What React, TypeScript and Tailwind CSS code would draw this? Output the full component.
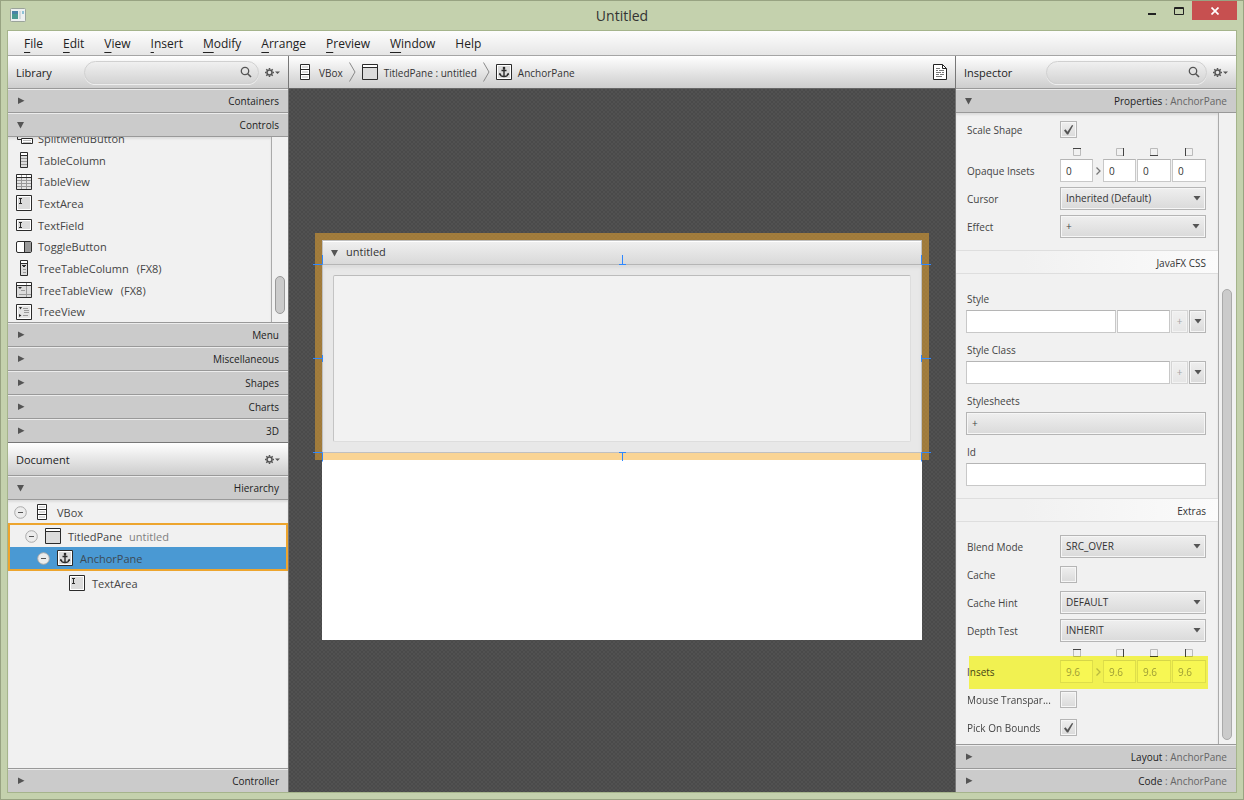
import type { ReactNode } from "react";

const menus = ["File", "Edit", "View", "Insert", "Modify", "Arrange", "Preview", "Window", "Help"];

const controls = [
  { label: "SplitMenuButton", icon: "splitMenu" },
  { label: "TableColumn", icon: "tableColumn" },
  { label: "TableView", icon: "tableView" },
  { label: "TextArea", icon: "textArea" },
  { label: "TextField", icon: "textField" },
  { label: "ToggleButton", icon: "toggle" },
  { label: "TreeTableColumn", note: "(FX8)", icon: "treeTableColumn" },
  { label: "TreeTableView", note: "(FX8)", icon: "treeTableView" },
  { label: "TreeView", icon: "treeView" },
];

const icons: Record<string, ReactNode> = {
  vbox: (
    <>
      <path d="M3.5.5h9v15h-9z" fill="#fff" stroke="#2b2b2b" />
      <path d="M3.5 5.5h9M3.5 10.5h9" stroke="#2b2b2b" />
      <path d="M5 2h6v2H5zM5 7h6v2H5zM5 12h6v2H5z" fill="#dcdcdc" />
    </>
  ),
  titledPane: (
    <>
      <path d="M.5.5h15v15H.5z" fill="#fff" stroke="#2b2b2b" />
      <path d="M1 4h14v11H1z" fill="#dcdcdc" />
      <path d="M1 3.5h14" stroke="#2b2b2b" />
    </>
  ),
  anchor: (
    <>
      <path d="M.5.5h15v15H.5z" fill="#fff" stroke="#2b2b2b" />
      <path d="M2 2h12v12H2z" fill="#dcdcdc" />
      <path d="M8 4v9M5.5 6.5h5" stroke="#2b2b2b" strokeWidth={1.4} />
      <path d="M4 9.8c.4 1.900 1.900 2.700 4 2.700s3.600-.8 4-2.700" stroke="#2b2b2b" strokeWidth={1.3} />
      <path d="M2.800 11 3.400 8.800 5.500 10.300zM13.200 11 12.600 8.800 10.500 10.300z" fill="#2b2b2b" />
      <circle cx={8} cy={4} r={1.3} fill="#2b2b2b" />
    </>
  ),
  textArea: (
    <>
      <path d="M.5.5h15v15H.5z" fill="#fff" stroke="#2b2b2b" />
      <path d="M2 2h12v12H2z" fill="#dcdcdc" />
      <path d="M3 3.5h3M3 8.5h3M4.500 3.5v5" stroke="#2b2b2b" />
    </>
  ),
  textField: (
    <>
      <path d="M.5 2.500h15v11H.5z" fill="#fff" stroke="#2b2b2b" />
      <path d="M2 4h12v8H2z" fill="#dcdcdc" />
      <path d="M3 5.500h3M3 10.500h3M4.500 5.500v5" stroke="#2b2b2b" />
    </>
  ),
  splitMenu: (
    <>
      <path d="M1.500 1v8.500h4M10.500 1v5M14.500 1v5" stroke="#2b2b2b" />
      <path d="M5.500 8.500h11v5h-11z" fill="#fff" stroke="#2b2b2b" />
      <path d="M7 10.500h8M7 12.500h8" stroke="#bbb" />
    </>
  ),
  tableColumn: (
    <>
      <path d="M4.500.5h7v15h-7z" fill="#dcdcdc" stroke="#2b2b2b" />
      <path d="M5 1h6v2H5z" fill="#fff" />
      <path d="M5 3.500h6" stroke="#2b2b2b" />
      <path d="M5 6.500h6M5 9.500h6M5 12.500h6" stroke="#999" />
    </>
  ),
  tableView: (
    <>
      <path d="M.5.5h15v15H.5z" fill="#e4e4e4" stroke="#2b2b2b" />
      <path d="M1 1h14v2H1z" fill="#fff" />
      <path d="M1 6.500h14M1 9.500h14M1 12.500h14M5.500 1v14M10.500 1v14" stroke="#999" />
      <path d="M1 3.500h14" stroke="#2b2b2b" />
    </>
  ),
  toggle: (
    <>
      <rect x={0.5} y={2.5} width={15} height={11} rx={1.5} fill="#fff" stroke="#2b2b2b" />
      <path d="M8 3h6.500l.5.5v9l-.5.5H8z" fill="#999" />
      <path d="M8.500 3v10" stroke="#2b2b2b" />
    </>
  ),
  treeTableColumn: (
    <>
      <path d="M4.500.5h7v15h-7z" fill="#dcdcdc" stroke="#2b2b2b" />
      <path d="M5 1h6v2H5z" fill="#fff" />
      <path d="M5 3.500h6" stroke="#2b2b2b" />
      <path d="M6 5.500h4M7 6.500h2" stroke="#2b2b2b" />
      <path d="M7 9.500h3M7 12.500h3" stroke="#999" />
    </>
  ),
  treeTableView: (
    <>
      <path d="M.5.5h15v15H.5z" fill="#dcdcdc" stroke="#2b2b2b" />
      <path d="M1 1h14v2H1z" fill="#fff" />
      <path d="M10.500 1v14M5 8.500h4M3 12.500h12" stroke="#999" />
      <path d="M1 3.500h14" stroke="#2b2b2b" />
      <path d="M2.500 5.500h3M3.500 6.500h1" stroke="#2b2b2b" />
    </>
  ),
  treeView: (
    <>
      <path d="M.5.5h15v15H.5z" fill="#fff" stroke="#2b2b2b" />
      <path d="M2 2h12v12H2z" fill="#e4e4e4" />
      <path d="M3 3h3L4.500 5.500zM3 10v3l2.500-1.500z" fill="#2b2b2b" />
      <path d="M7 4.500h5M8 6.500h5M8 8.500h5M7 11.500h5" stroke="#999" />
    </>
  ),
};

function NodeIcon({ name }: { name: string }) {
  return (
    <svg viewBox="0 0 16 16" className="size-4 shrink-0 overflow-visible" fill="none" aria-hidden="true">
      {icons[name]}
    </svg>
  );
}

function Arrow({ open }: { open?: boolean }) {
  return (
    <svg viewBox="0 0 8 8" className="size-2 shrink-0" fill="#555" aria-hidden="true">
      <path d={open ? "M0 1h7L3.500 7.500z" : "M1 .5v6.500L7.500 3.800z"} />
    </svg>
  );
}

function SectionBar({ title, detail, open }: { title: string; detail?: string; open?: boolean }) {
  return (
    <button
      type="button"
      aria-expanded={!!open}
      className="flex h-6 shrink-0 items-center justify-between border-t border-[#999] bg-[#cbcbcb] px-[9px] text-[10px] text-[#222] shadow-[inset_0_1px_0_#ececec]"
    >
      <Arrow open={open} />
      <span className="pt-[2px]">
        {title}
        {detail && <span className="text-[#666]"> : {detail}</span>}
      </span>
    </button>
  );
}

function GearButton({ label }: { label: string }) {
  return (
    <button type="button" aria-label={label} className="flex items-center">
      <svg viewBox="0 0 15 9" className="h-[9px] w-[15px]" fill="none" aria-hidden="true">
        <circle cx={4.5} cy={4.5} r={2.5} stroke="#555" strokeWidth={1.5} />
        <path
          d="M4.500 0v1.500M4.500 7.500V9M0 4.500h1.500M7.500 4.500H9M1.300 1.300l1 1M6.700 6.700l1 1M1.300 7.700l1-1M6.700 2.300l1-1"
          stroke="#555"
          strokeWidth={1.5}
        />
        <path d="M10 3.500h5L12.500 6z" fill="#555" />
      </svg>
    </button>
  );
}

function PanelHeader({ title, search }: { title: string; search?: string }) {
  return (
    <header className="flex h-8 shrink-0 items-center bg-linear-to-b from-white to-[#cdcdcd] px-2">
      <h2 className="w-17 shrink-0 pt-[2px] text-[11px] text-[#222]">{title}</h2>
      <div className={search ? "relative mr-[6px] flex-1 " + search : "flex-1"}>
        {search && (
          <>
            <input
              type="search"
              aria-label={"Search " + title}
              className="block h-[23px] w-full rounded-full border border-[#d0d0d0] bg-linear-to-b from-[#f0f0f0] to-[#d4d4d4] pr-7 pl-3 text-[11px] shadow-[0_1px_0_#eee] outline-none"
            />
            <svg
              viewBox="0 0 12 12"
              className="absolute top-[5px] right-[7px] size-3"
              fill="none"
              stroke="#555"
              strokeWidth={1.3}
              aria-hidden="true"
            >
              <circle cx={5} cy={5} r={3.7} />
              <path d="M7.700 7.700 11 11" strokeWidth={1.6} />
            </svg>
          </>
        )}
      </div>
      <GearButton label={title + " options"} />
    </header>
  );
}

function TitleBar() {
  return (
    <header className="flex h-[29px] shrink-0 items-start justify-between">
      <svg viewBox="0 0 16 14" className="mt-[7px] ml-[3px] h-[14px] w-4" aria-hidden="true">
        <rect x={0.5} y={0.5} width={15} height={13} rx={1} fill="#eef0f0" stroke="#9aa39a" />
        <path d="M2 3h6v8H2z" fill="#4b9a92" />
        <path d="M2 3h6v3H2z" fill="#4a83a6" />
        <path d="M9 3h2v8H9z" fill="#d5dadd" />
        <path d="M12 3h2v3h-2z" fill="#8fc3d8" />
      </svg>
      <h1 className="ml-[78px] self-center text-[14px] text-[#333]">Untitled</h1>
      <div className="flex h-[19px] items-center">
        <button type="button" aria-label="Minimize" className="px-2">
          <svg viewBox="0 0 10 10" className="size-[10px]" aria-hidden="true">
            <path d="M0 7h8v2H0z" fill="#222" />
          </svg>
        </button>
        <button type="button" aria-label="Maximize" className="px-2">
          <svg viewBox="0 0 10 10" className="size-[10px] overflow-visible" aria-hidden="true">
            <path d="M.5 1.500h9v7h-9zM.5 2.500h9" fill="none" stroke="#222" />
          </svg>
        </button>
        <button type="button" aria-label="Close" className="flex h-full w-[45px] items-center justify-center bg-[#c75050]">
          <svg viewBox="0 0 8 8" className="size-2" aria-hidden="true">
            <path d="M.5.5l7 7M7.500.5l-7 7" stroke="#fff" strokeWidth={1.7} />
          </svg>
        </button>
      </div>
    </header>
  );
}

function LibraryPanel() {
  return (
    <section className="flex min-h-0 flex-[387] flex-col">
      <PanelHeader title="Library" search="ml-0" />
      <SectionBar title="Containers" />
      <SectionBar title="Controls" open />
      <div className="flex min-h-0 flex-1 border-t border-[#999]">
        <div className="flex flex-1 flex-col justify-end overflow-hidden border-r border-[#aaa] shadow-[inset_0_2px_2px_#ddd]">
          <ul className="grid h-[195px] shrink-0 auto-rows-fr pl-2">
            {controls.map((item) => (
              <li key={item.label} className="flex items-center gap-[6px] text-[11px] text-[#444]">
                <NodeIcon name={item.icon} />
                <span className="pt-[2px]">
                  {item.label}
                  {item.note && <span className="ml-2">{item.note}</span>}
                </span>
              </li>
            ))}
          </ul>
        </div>
        <div className="flex w-4 flex-col justify-end px-[3px] pb-2">
          <div className="h-[38px] rounded-full border border-[#999] bg-[#cbcbcb]" />
        </div>
      </div>
      {["Menu", "Miscellaneous", "Shapes", "Charts", "3D"].map((title) => (
        <SectionBar key={title} title={title} />
      ))}
    </section>
  );
}

type TreeRowProps = { label: string; note?: string; icon: string; className: string; leaf?: boolean };

function TreeRow({ label, note, icon, className, leaf }: TreeRowProps) {
  return (
    <li className={"flex items-center gap-[7px] text-[11px] " + className}>
      {!leaf && (
        <button type="button" aria-label={"Collapse " + label} className="shrink-0">
          <svg viewBox="0 0 13 13" className="size-[13px]" aria-hidden="true">
            <circle cx={6.5} cy={6.5} r={5.8} fill="#ececec" stroke="#aaa" />
            <path d="M4 6.500h5" stroke="#555" />
          </svg>
        </button>
      )}
      <NodeIcon name={icon} />
      <span className="pt-[2px]">
        {label}
        {note && <span className="ml-[7px] text-[#808080]">{note}</span>}
      </span>
    </li>
  );
}

function DocumentPanel() {
  return (
    <section className="flex min-h-0 flex-[349] flex-col border-t border-[#777]">
      <PanelHeader title="Document" />
      <SectionBar title="Hierarchy" open />
      <div className="min-h-0 flex-1 overflow-hidden border-t border-[#999] pt-px shadow-[inset_0_2px_2px_#ddd]">
        <ul>
          <TreeRow label="VBox" icon="vbox" className="h-[22px] pl-[6px] text-[#444]" />
          <li className="border-2 border-[#eda52e]">
            <ul>
              <TreeRow
                label="TitledPane"
                note="untitled"
                icon="titledPane"
                className="h-[22px] pl-[15px] text-[#444]"
              />
              <TreeRow label="AnchorPane" icon="anchor" className="h-[22px] bg-[#4a99d3] pl-[27px] text-[#3c4a55]" />
            </ul>
          </li>
          <TreeRow label="TextArea" icon="textArea" leaf className="h-6 pl-[61px] text-[#444]" />
        </ul>
      </div>
      <SectionBar title="Controller" />
    </section>
  );
}

function Chevron() {
  return (
    <svg viewBox="0 0 7 20" className="h-5 w-[7px] shrink-0" aria-hidden="true">
      <path d="M.5.5l5.500 9.500-5.500 9.500" fill="none" stroke="#888" />
    </svg>
  );
}

function Stage() {
  return (
    <div className="flex flex-1 items-center justify-center overflow-hidden bg-[repeating-conic-gradient(#4a4a4a_0_25%,#515151_0_50%)] bg-size-[4px_4px] pb-px">
      <div className="relative h-[400px] w-[600px] shrink-0 bg-white">
        <div className="flex h-[213px] flex-col border border-[#c0c0c0] bg-[#e8e8e8]">
          <div className="flex h-6 shrink-0 items-center gap-[7px] border-b border-[#b5b5b5] bg-linear-to-b from-[#f0f0f0] to-[#d9d9d9] pl-2 text-[11px] text-[#333] shadow-[inset_0_1px_0_#fff]">
            <Arrow open />
            <span>untitled</span>
          </div>
          <div className="flex flex-1 p-[10px] shadow-[inset_0_3px_3px_#dcdcdc]">
            <textarea
              aria-label="untitled"
              className="flex-1 resize-none rounded-xs border border-t-[#bcbcbc] border-r-[#ddd] border-b-[#ddd] border-l-[#c4c4c4] bg-[#f2f2f2] outline-none"
            />
          </div>
        </div>
        <div className="pointer-events-none absolute -top-[7px] -left-[7px] h-[227px] w-[614px] border-7 border-[#f3aa2a]/50" />
        {/* anchor handles of the selected pane */}
        <svg
          viewBox="0 0 600 213"
          className="pointer-events-none absolute top-0 left-0 h-[213px] w-[600px] overflow-visible"
          fill="none"
          stroke="#2d87ff"
          aria-hidden="true"
        >
          <path d="M-9 24.500H.5V15M300.500 15v9.500M297 24.500h7M609 24.500h-9.500V15" />
          <path d="M-9 118.500H0M.5 115v7M609 118.500h-9.500M599.500 115v7" />
          <path d="M-9 212.500H.5v9M300.500 221v-8.500M297 212.500h7M609 212.500h-9.500v9" />
        </svg>
      </div>
    </div>
  );
}

function Editor() {
  return (
    <main className="flex min-w-0 flex-1 flex-col">
      <nav
        aria-label="Selection path"
        className="flex h-[33px] shrink-0 items-center border-b border-[#666] bg-linear-to-b from-white to-[#cdcdcd] px-2 text-[10px] text-[#333]"
      >
        <a href="#vbox" className="flex items-center gap-[6px]">
          <NodeIcon name="vbox" />
          <span className="pt-[2px]">VBox</span>
        </a>
        <span className="px-[6px]">
          <Chevron />
        </span>
        <a href="#titledpane" className="flex items-center gap-[6px]">
          <NodeIcon name="titledPane" />
          <span className="pt-[2px]">TitledPane : untitled</span>
        </a>
        <span className="px-[6px]">
          <Chevron />
        </span>
        <a href="#anchorpane" className="flex items-center gap-[6px]">
          <NodeIcon name="anchor" />
          <span className="pt-[2px]">AnchorPane</span>
        </a>
        <button type="button" aria-label="Show document" className="ml-auto">
          <svg viewBox="0 0 14 16" className="h-4 w-[14px]" fill="none" aria-hidden="true">
            <path d="M.5.5h9l4 4v11H.5z" fill="#fff" stroke="#222" />
            <path d="M9.500.5v4h4" stroke="#222" />
            <path d="M3 4.500h4M3 6.500h2M6 6.500h5M3 8.500h5M9 8.500h2M3 10.500h3M7 10.500h4M3 12.500h6" stroke="#777" />
          </svg>
        </button>
      </nav>
      <Stage />
    </main>
  );
}

const boxStyle =
  "border border-[#b5b5b5] bg-linear-to-b from-[#efefef] to-[#dadada] shadow-[inset_0_0_0_1px_#f6f6f6]";
const fieldStyle =
  "h-[23px] min-w-0 border border-[#c8c8c8] border-t-[#b5b5b5] bg-white px-[5px] text-[10px] text-[#333] outline-none";

function DropArrow({ className }: { className?: string }) {
  return (
    <svg viewBox="0 0 8 5" className={"h-[5px] w-2 " + (className ?? "")} fill="#555" aria-hidden="true">
      <path d="M.5 0h7L4 4.500z" />
    </svg>
  );
}

function Row({ id, label, children }: { id: string; label: string; children: ReactNode }) {
  return (
    <div className="relative grid h-7 grid-cols-[94px_1fr] items-center pb-px">
      <label htmlFor={id} className="pt-[2px] pl-px whitespace-nowrap">
        {label}
      </label>
      {children}
    </div>
  );
}

function SelectRow({ id, label, value }: { id: string; label: string; value: string }) {
  return (
    <Row id={id} label={label}>
      <div className="relative flex">
        <select id={id} className={"h-[23px] w-full appearance-none px-[5px] text-[10px] text-[#333] " + boxStyle}>
          <option>{value}</option>
        </select>
        <DropArrow className="pointer-events-none absolute top-[9px] right-[5px]" />
      </div>
    </Row>
  );
}

function CheckRow({ id, label, checked }: { id: string; label: string; checked?: boolean }) {
  return (
    <Row id={id} label={label}>
      <div className="relative size-[17px]">
        <input type="checkbox" id={id} defaultChecked={checked} className={"peer block size-full appearance-none " + boxStyle} />
        <svg
          viewBox="0 0 17 17"
          className="pointer-events-none absolute inset-0 hidden size-full peer-checked:block"
          aria-hidden="true"
        >
          <path d="M4 9.500l1.500-1.200 2 2.500L12 4l1.200.6-5 9H7z" fill="#555" />
        </svg>
      </div>
    </Row>
  );
}

const sides = [
  { name: "top", path: "M0 .5h8" },
  { name: "right", path: "M7.500 0v8" },
  { name: "bottom", path: "M0 7.500h8" },
  { name: "left", path: "M.5 0v8" },
];

function InsetsRow({ id, label, value, marked }: { id: string; label: string; value: string; marked?: boolean }) {
  return (
    <>
      <div className="grid h-[13px] grid-cols-[33fr_10fr_33fr_34fr_34fr] items-center pt-[3px] pl-[94px]">
        {sides.map((side, i) => (
          <svg
            key={side.name}
            viewBox="0 0 8 8"
            className={i === 1 ? "col-start-3 size-2 justify-self-center" : "size-2 justify-self-center"}
            fill="none"
            aria-hidden="true"
          >
            <path d="M.5.5h7v7h-7z" stroke="#bbb" />
            <path d={side.path} stroke="#444" />
          </svg>
        ))}
      </div>
      <Row id={id} label={label}>
        <div className={marked ? "flex items-center opacity-45" : "flex items-center"}>
          <input id={id} defaultValue={value} className={"w-0 flex-[21] " + fieldStyle} />
          <svg viewBox="0 0 10 8" className="h-2 w-[10px] shrink-0" fill="none" aria-hidden="true">
            <path d="M3.500.5L7 4 3.500 7.500" stroke="#777" strokeWidth={1.3} />
          </svg>
          <input aria-label={label + " right"} defaultValue={value} className={"w-0 flex-[21] " + fieldStyle} />
          <input aria-label={label + " bottom"} defaultValue={value} className={"ml-px w-0 flex-[22] " + fieldStyle} />
          <input aria-label={label + " left"} defaultValue={value} className={"ml-px w-0 flex-[22] " + fieldStyle} />
        </div>
        {marked && (
          <div className="pointer-events-none absolute -top-[2px] -right-[2px] -bottom-[3px] left-[3px] bg-[#ffff55] mix-blend-multiply" />
        )}
      </Row>
    </>
  );
}

function Band({ title }: { title: string }) {
  return (
    <h3 className="flex h-6 items-center justify-end border-y border-[#dedede] bg-linear-to-r from-[#f1f1f1] from-25% to-[#fbfbfb] pt-[3px] pr-3 text-[10px] text-[#333]">
      {title}
    </h3>
  );
}

function StackLabel({ htmlFor, text }: { htmlFor: string; text: string }) {
  return (
    <label htmlFor={htmlFor} className="block h-5 pt-px pl-px leading-4">
      {text}
    </label>
  );
}

function AddButtons({ label }: { label: string }) {
  return (
    <>
      <button type="button" disabled aria-label={"Add " + label} className={"h-[23px] w-[17px] opacity-45 " + boxStyle}>
        +
      </button>
      <button
        type="button"
        aria-label={label + " menu"}
        className={"flex h-[23px] w-[17px] items-center justify-center " + boxStyle}
      >
        <DropArrow />
      </button>
    </>
  );
}

function InspectorPanel() {
  return (
    <aside className="flex w-[281px] shrink-0 flex-col border-l border-[#777]">
      <PanelHeader title="Inspector" search="ml-[14px]" />
      <SectionBar title="Properties" detail="AnchorPane" open />
      <div className="flex min-h-0 flex-1 border-t border-[#999]">
        <div className="min-w-0 flex-1 overflow-hidden border-r border-[#aaa] pt-[3px] text-[10px] text-[#444] shadow-[inset_0_2px_2px_#ddd]">
          <div className="pr-3 pl-[10px]">
            <CheckRow id="scale-shape" label="Scale Shape" checked />
            <InsetsRow id="opaque-insets" label="Opaque Insets" value="0" />
            <SelectRow id="cursor" label="Cursor" value="Inherited (Default)" />
            <Row id="effect" label="Effect">
              <button
                type="button"
                id="effect"
                className={"flex h-[23px] items-center justify-between px-[5px] " + boxStyle}
              >
                +
                <DropArrow />
              </button>
            </Row>
          </div>
          <div className="mt-[9px]">
            <Band title="JavaFX CSS" />
          </div>
          <div className="flex flex-col gap-2 pt-4 pr-3 pb-3 pl-[10px]">
            <div>
              <StackLabel htmlFor="style" text="Style" />
              <div className="flex gap-px">
                <input id="style" className={"w-0 flex-[138] " + fieldStyle} />
                <input aria-label="Style value" className={"w-0 flex-[41] " + fieldStyle} />
                <AddButtons label="Style" />
              </div>
            </div>
            <div>
              <StackLabel htmlFor="style-class" text="Style Class" />
              <div className="flex gap-px">
                <input id="style-class" className={"w-0 flex-1 " + fieldStyle} />
                <AddButtons label="Style Class" />
              </div>
            </div>
            <div>
              <StackLabel htmlFor="stylesheets" text="Stylesheets" />
              <button type="button" id="stylesheets" className={"block h-[23px] w-full px-[5px] text-left " + boxStyle}>
                +
              </button>
            </div>
            <div>
              <StackLabel htmlFor="node-id" text="Id" />
              <input id="node-id" className={"block w-full " + fieldStyle} />
            </div>
          </div>
          <Band title="Extras" />
          <div className="pt-[11px] pr-3 pl-[10px]">
            <SelectRow id="blend-mode" label="Blend Mode" value="SRC_OVER" />
            <CheckRow id="cache" label="Cache" />
            <SelectRow id="cache-hint" label="Cache Hint" value="DEFAULT" />
            <SelectRow id="depth-test" label="Depth Test" value="INHERIT" />
            <InsetsRow id="insets" label="Insets" value="9.6" marked />
            <CheckRow id="mouse-transparent" label="Mouse Transpar..." />
            <CheckRow id="pick-on-bounds" label="Pick On Bounds" checked />
          </div>
        </div>
        <div className="flex w-[17px] flex-col px-[3px] pt-44 pb-1">
          <div className="w-[10px] flex-1 rounded-full border border-[#aaa] bg-[#cbcbcb]" />
        </div>
      </div>
      <SectionBar title="Layout" detail="AnchorPane" />
      <SectionBar title="Code" detail="AnchorPane" />
    </aside>
  );
}

export default function App() {
  return (
    <div className="flex h-screen flex-col border border-[#98a382] bg-[#c4d1ad] px-[6px] pb-[6px] font-['Open_Sans',sans-serif]">
      <TitleBar />
      <div className="flex min-h-0 flex-1 flex-col border border-[#a5b48c] bg-[#f1f1f1]">
        <nav
          aria-label="Main menu"
          className="flex h-[25px] shrink-0 items-center gap-5 border-b border-[#a5a5a5] bg-linear-to-b from-[#fdfdfd] to-[#e6e6e6] px-4 text-[12px] text-[#222]"
        >
          {menus.map((menu) => (
            <button key={menu} type="button" className="pt-[2px]">
              {menu === "Help" ? (
                menu
              ) : (
                <>
                  <span className="underline underline-offset-4">{menu[0]}</span>
                  {menu.slice(1)}
                </>
              )}
            </button>
          ))}
        </nav>
        <div className="flex min-h-0 flex-1">
          <aside className="flex w-[281px] shrink-0 flex-col border-r border-[#777]">
            <LibraryPanel />
            <DocumentPanel />
          </aside>
          <Editor />
          <InspectorPanel />
        </div>
      </div>
    </div>
  );
}
